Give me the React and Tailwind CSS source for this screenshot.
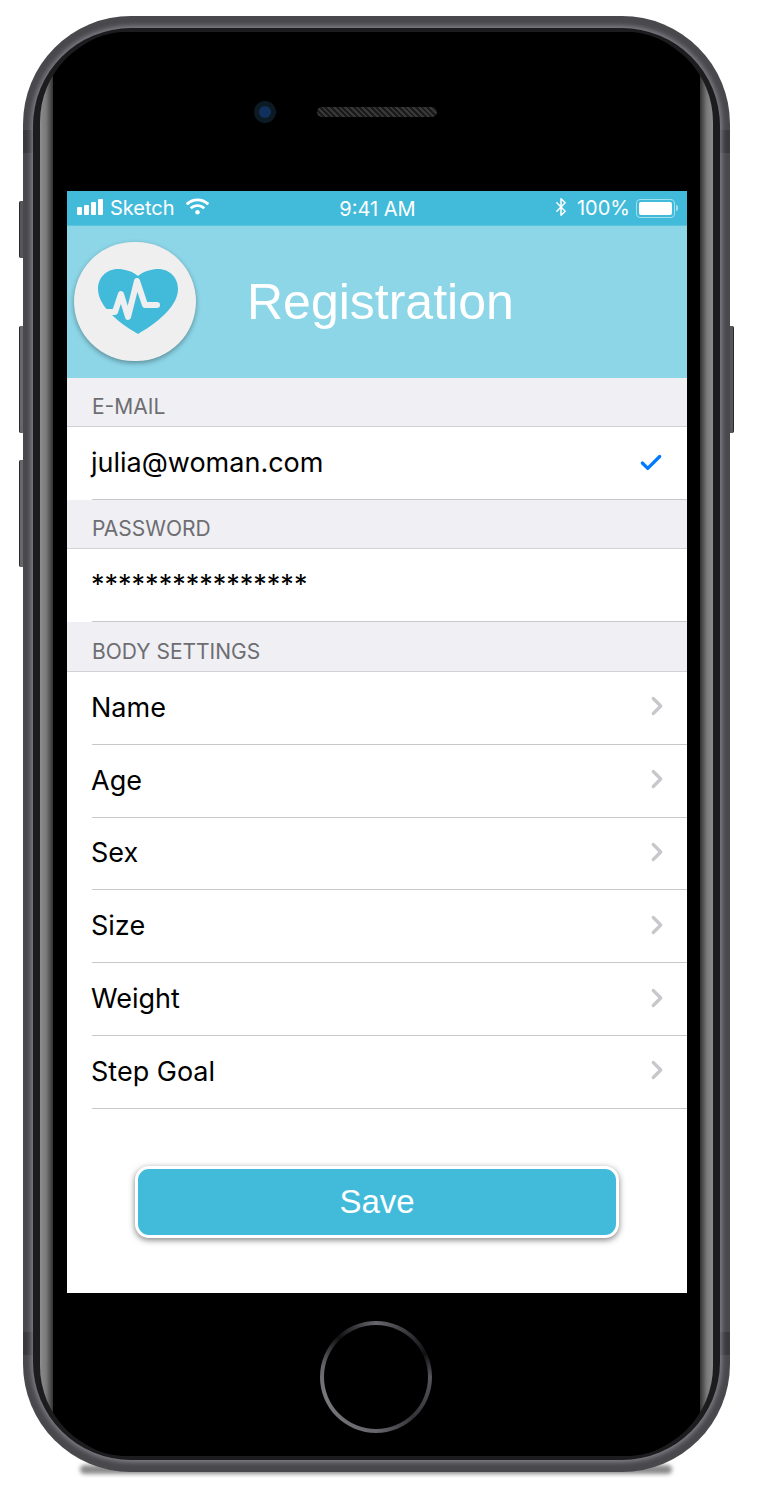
import { Bluetooth, Check, ChevronRight } from "lucide-react";
import { FaWifi } from "react-icons/fa";

const bodyRows = ["Name", "Age", "Sex", "Size", "Weight", "Step Goal"];

function SectionHeader({ children, h = "h-[49px]" }) {
  return (
    <div className={`${h} flex items-center pl-[25px] pt-[9px] bg-[#efeff4] border-b border-[#d2d1d6] text-[21px] leading-none text-[#6d6d72] font-['Inter',sans-serif]`}>
      {children}
    </div>
  );
}

function Row({ children, right, h = "h-[73px]" }) {
  return (
    <div className={`${h} pl-[25px] bg-white`}>
      <div className="h-full flex items-center justify-between border-b border-[#c8c7cc] pr-[24px] text-[27px] leading-none text-black font-['Inter',sans-serif]">
        <span className="-ml-px -mt-px">{children}</span>
        {right}
      </div>
    </div>
  );
}

function HeartLogo() {
  return (
    <svg width="122" height="119" viewBox="0 0 122 119">
      <path d="M64 34C58 29 50 27 44 27C32 27 24 36 24 47C24 62 40 78 64 92C88 78 104 62 104 47C104 36 96 27 84 27C78 27 70 29 64 34Z" fill="#42bbdb" />
      <path d="M19 70H41L47 52L54 75L63 39L71 63H83" fill="none" stroke="#efefef" strokeWidth="6" strokeLinecap="round" strokeLinejoin="round" />
    </svg>
  );
}

function StatusBar() {
  return (
    <div className="h-[35px] bg-[#42bbdb] border-b border-[#5cc4df] flex items-center justify-between pl-[10px] pr-[9px] text-white text-[20px] leading-none font-['Inter',sans-serif]">
      <div className="w-[200px] flex items-center">
        <div className="flex items-end gap-[2px] h-[16px] mb-[2px]">
          <div className="w-[5px] h-[8px] rounded-[1px] bg-white" />
          <div className="w-[5px] h-[10px] rounded-[1px] bg-white" />
          <div className="w-[5px] h-[13px] rounded-[1px] bg-white" />
          <div className="w-[5px] h-[16px] rounded-[1px] bg-white" />
        </div>
        <span className="ml-[7px]">Sketch</span>
        <FaWifi className="ml-[11px] mb-[3px] text-[23px]" />
      </div>
      <span className="mt-[2px]">9:41 AM</span>
      <div className="w-[200px] flex items-center justify-end">
        <Bluetooth size={20} strokeWidth={1.8} className="mb-[3px]" />
        <span className="ml-[6px]">100%</span>
        <div className="ml-[6px] w-[39px] h-[19px] p-[2px] rounded-[4px] border border-[#9fe0ef]">
          <div className="w-full h-full rounded-[2px] bg-white" />
        </div>
        <div className="ml-[1px] w-[2px] h-[6px] rounded-r-[2px] bg-[#9fe0ef]" />
      </div>
    </div>
  );
}

function Screen() {
  return (
    <div className="h-[1102px] bg-white flex flex-col">
      <StatusBar />
      <div className="h-[152px] bg-[#8cd6e8] flex items-center pl-[7px]">
        <div className="w-[122px] h-[119px] rounded-full bg-[#efefef] shadow-[0_2px_5px_rgba(0,0,0,0.35)] -mt-[2px]">
          <HeartLogo />
        </div>
        <div className="ml-[51px] text-[50px] leading-none text-white font-['Liberation_Sans',sans-serif]">Registration</div>
      </div>
      <SectionHeader>E-MAIL</SectionHeader>
      <Row right={<Check size={26} strokeWidth={3} className="text-[#007aff] -mr-[1px]" />}>julia@woman.com</Row>
      <SectionHeader>PASSWORD</SectionHeader>
      <Row>****************</Row>
      <SectionHeader h="h-[50px]">BODY SETTINGS</SectionHeader>
      {bodyRows.map((label) => (
        <Row key={label} h="h-[72.8px]" right={<ChevronRight size={30} strokeWidth={2.6} className="text-[#c7c7cc] -mr-[9px] -mt-[3px]" />}>
          {label}
        </Row>
      ))}
      <div className="flex-1 flex items-start justify-center pt-[57px]">
        <button className="w-[484px] h-[72px] rounded-[14px] border-[3px] border-white bg-[#42bbdb] shadow-[0_2px_6px_rgba(0,0,0,0.5)] text-white text-[33px] leading-none font-['Liberation_Sans',sans-serif]">
          Save
        </button>
      </div>
    </div>
  );
}

export default function App() {
  return (
    <div className="relative w-[774px] h-[1488px] bg-white pl-[23px] pt-[16px] overflow-hidden">
      {/* side buttons */}
      <div className="absolute left-[19px] top-[201px] w-[5px] h-[57px] rounded-l-[2px] bg-[#55555a] border-l border-[#2a2a2c]" />
      <div className="absolute left-[19px] top-[326px] w-[5px] h-[107px] rounded-l-[2px] bg-[#66666b] border-l border-[#2a2a2c]" />
      <div className="absolute left-[19px] top-[460px] w-[5px] h-[107px] rounded-l-[2px] bg-[#66666b] border-l border-[#2a2a2c]" />
      <div className="absolute left-[729px] top-[326px] w-[5px] h-[107px] rounded-r-[2px] bg-[#55555a] border-r border-[#2a2a2c]" />
      {/* ground shadow */}
      <div className="absolute left-[80px] top-[1465px] w-[592px] h-[9px] rounded-full bg-[#8a8a8a] blur-[2px]" />

      <div className="relative w-[707px] h-[1456px] rounded-[108px] bg-[#48484d] px-[10px] py-[12px] overflow-hidden">
        {/* antenna bands */}
        <div className="absolute left-0 top-[114px] w-[10px] h-[23px] bg-[#3a3a3e]" />
        <div className="absolute right-0 top-[114px] w-[10px] h-[23px] bg-[#3a3a3e]" />
        <div className="absolute left-0 bottom-[117px] w-[10px] h-[23px] bg-[#3a3a3e]" />
        <div className="absolute right-0 bottom-[117px] w-[10px] h-[23px] bg-[#3a3a3e]" />

        <div className="relative h-full rounded-[98px] bg-[#1c1c1e] px-[7px] py-[4px] shadow-[0_0_5px_2px_rgba(150,150,158,0.75)]">
          <div className="h-full rounded-[90px] px-[13px] bg-[linear-gradient(90deg,#8c8c8c_0,#7a7a7a_6px,#333333_13px,#000000_13px,#000000_660px,#333333_660px,#7a7a7a_667px,#8c8c8c_673px)]">
            <div className="h-full rounded-[72px] bg-black px-[14px] pr-[13px] flex flex-col">
              <div className="flex items-center pt-[69px] pl-[187px] pb-[68px]">
                <div className="w-[22px] h-[22px] rounded-full bg-[#0c1a24] flex items-center justify-center">
                  <div className="w-[12px] h-[12px] rounded-full bg-[#12305c]" />
                </div>
                <div className="ml-[41px] w-[120px] h-[10px] rounded-full bg-[#2b2b2b] bg-[repeating-linear-gradient(45deg,#1a1a1a_0,#1a1a1a_2px,#383838_2px,#383838_4px)]" />
              </div>
              <Screen />
              <div className="flex justify-center pt-[28px] pr-[2px]">
                <div className="w-[112px] h-[112px] rounded-full p-[4px] bg-[conic-gradient(#66666c,#111114_18%,#55555a_25%,#333338_38%,#66666c_50%,#77777c_70%,#66666c_78%,#111114_88%,#66666c)]">
                  <div className="w-full h-full rounded-full bg-black" />
                </div>
              </div>
            </div>
          </div>
        </div>
      </div>
    </div>
  );
}
